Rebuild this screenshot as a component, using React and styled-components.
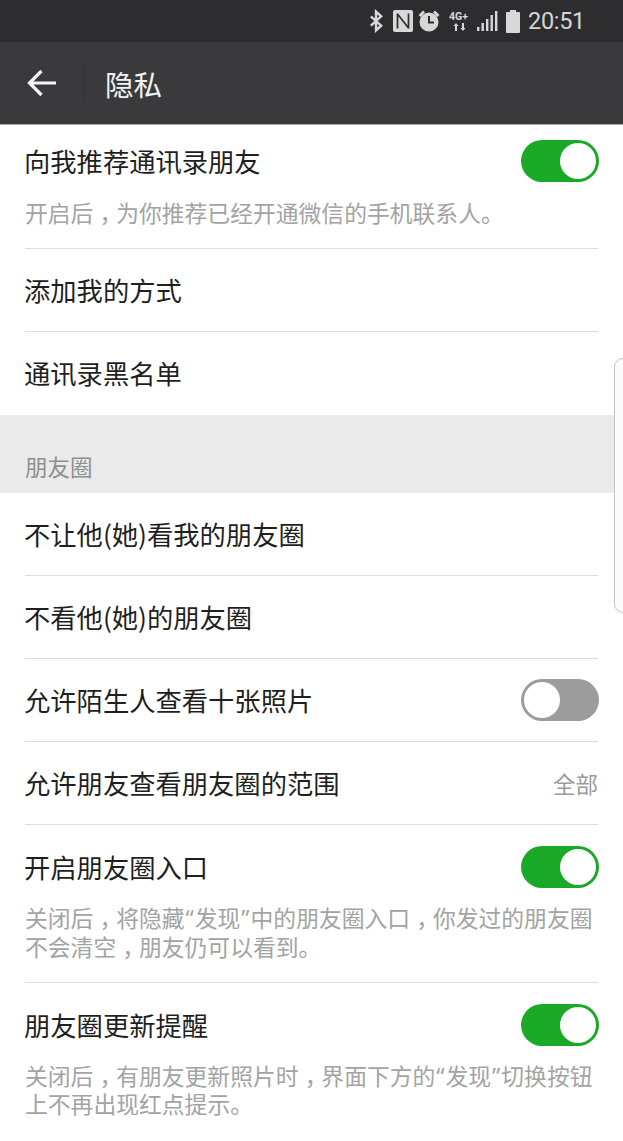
import React from "react";
import styled, { createGlobalStyle } from "styled-components";

const Global = createGlobalStyle`
  html, body { margin: 0; padding: 0; background: #fff; }
  body { font-family: "Roboto", "Noto Sans CJK SC", sans-serif; }
`;

const Page = styled.div`
  position: relative;
  width: 623px;
  height: 1141px;
  overflow: hidden;
  background: #fff;
`;

const StatusBar = styled.div`
  height: 42px;
  background: #2d2d30;
  color: #d8d8d8;
  display: flex;
  align-items: center;
  justify-content: flex-end;
  padding-right: 38px;
  box-sizing: border-box;
`;

const StatusIcon = styled.svg`
  display: block;
  margin-right: ${(p) => p.$gap || 4}px;
`;

const Clock = styled.span`
  font-family: "Roboto", sans-serif;
  font-size: 23.5px;
  letter-spacing: -0.3px;
  margin-left: 3px;
  color: #d6d6d6;
`;

const NavBar = styled.div`
  height: 83px;
  background: #3a3a3d;
  border-bottom: 1px solid #aaa;
  box-sizing: border-box;
  display: flex;
  align-items: center;
  padding-left: 27px;
`;

const BackIcon = styled.svg`
  display: block;
  width: 30px;
  height: 30px;
`;

const NavDivider = styled.div`
  width: 1px;
  height: 40px;
  margin-left: 26px;
  background: #323235;
`;

const NavTitle = styled.div`
  margin-left: 21px;
  color: #f2f2f2;
  font-size: 28.5px;
  font-family: "Noto Sans CJK SC", sans-serif;
`;

const Row = styled.div`
  height: ${(p) => p.$h}px;
  box-sizing: border-box;
  margin: 0 25px;
  border-bottom: 1px solid ${(p) => (p.$last ? "transparent" : "#dcdcdc")};
  display: flex;
  flex-direction: column;
  justify-content: ${(p) => (p.$top ? "flex-start" : "center")};
  padding-top: ${(p) => p.$top || 0}px;
`;

const RowMain = styled.div`
  display: flex;
  align-items: center;
  justify-content: space-between;
  min-height: 42px;
`;

const Title = styled.div`
  font-size: 26.3px;
  color: #1f1f1f;
  line-height: 42px;
  margin-left: -1px;
  font-family: "Noto Sans CJK SC", sans-serif;
`;

const Value = styled.div`
  font-size: 22.5px;
  color: #9a9a9a;
  font-family: "Noto Sans CJK SC", sans-serif;
`;

const Sub = styled.div`
  font-size: 22.8px;
  line-height: 28px;
  color: #a3a3a3;
  margin-top: ${(p) => p.$mt || 15}px;
  white-space: nowrap;
  font-family: "Noto Sans", "Noto Sans CJK SC", sans-serif;
`;

// half-width glyph padded back to a full cell, so the comma sits centred as in the reference
const Comma = styled.span`
  font-family: "Noto Sans CJK SC", sans-serif;
  font-feature-settings: "halt";
  padding: 0 0.23em 0 0.27em;
`;

const Quote = styled.span`
  padding: 0 1px;
`;

const Section = styled.div`
  height: 78px;
  background: #eaeaea;
  box-sizing: border-box;
  padding: 35px 25px 0;
  font-size: 22.5px;
  line-height: 32px;
  color: #8f8f8f;
  font-family: "Noto Sans CJK SC", sans-serif;
`;

const Switch = styled.div`
  width: 78px;
  height: 42px;
  margin-right: -1px;
  border-radius: 21px;
  background: ${(p) => (p.$on ? "#1aa827" : "#9c9c9c")};
  position: relative;
  flex: none;

  &::after {
    content: "";
    position: absolute;
    top: 3px;
    left: ${(p) => (p.$on ? "39px" : "3px")};
    width: 36px;
    height: 36px;
    border-radius: 50%;
    background: #fff;
  }
`;

const EdgeHandle = styled.div`
  position: absolute;
  right: -6px;
  top: 358px;
  width: 15px;
  height: 255px;
  box-sizing: border-box;
  border: 1px solid #c4c4c4;
  border-radius: 9px 0 0 9px;
  background: #fbfbfb;
`;

function SettingRow({ title, on, value, sub, h, top, last, mt }) {
  return (
    <Row $h={h} $top={top} $last={last}>
      <RowMain>
        <Title>{title}</Title>
        {on !== undefined && <Switch $on={on} />}
        {value && <Value>{value}</Value>}
      </RowMain>
      {sub && <Sub $mt={mt}>{sub}</Sub>}
    </Row>
  );
}

export default function App() {
  return (
    <Page>
      <Global />
      <StatusBar>
        <StatusIcon $gap={9} width="15" height="24" viewBox="0 0 16 24" fill="none" stroke="#d8d8d8" strokeWidth="2.6">
          <path d="M2 7l11 10-5.5 5V2L13 7 2 17" />
        </StatusIcon>
        <StatusIcon $gap={4} width="20" height="22" viewBox="0 0 20 22">
          <rect width="20" height="22" rx="2" fill="#d8d8d8" />
          <path d="M4.5 3.5v15M4.5 4 15.5 18M15.5 3.5v15" fill="none" stroke="#2d2d30" strokeWidth="1.7" />
        </StatusIcon>
        <StatusIcon $gap={8} width="24" height="24" viewBox="0 0 24 24">
          <path d="M1.5 6 6 1.5l2 2L3.5 8zM22.5 6 18 1.5l-2 2L20.5 8z" fill="#d8d8d8" />
          <circle cx="12" cy="13" r="9.5" fill="#d8d8d8" />
          <path d="M12 7v6.5h5" fill="none" stroke="#2d2d30" strokeWidth="2" />
        </StatusIcon>
        <StatusIcon $gap={6} width="22" height="22" viewBox="0 0 22 22" fill="#d8d8d8">
          <text x="0" y="10" fontSize="10.5" fontWeight="700" fontFamily="Roboto, sans-serif">4G+</text>
          <path d="M7 13l2.5 3h-5zM14 21l-2.5-3h5z" />
          <rect x="6" y="16" width="2" height="5" />
          <rect x="13" y="13" width="2" height="5" />
        </StatusIcon>
        <StatusIcon $gap={8} width="21" height="22" viewBox="0 0 21 22" fill="#d8d8d8">
          <rect x="0" y="17" width="2.4" height="4" />
          <rect x="4.5" y="13" width="2.4" height="8" />
          <rect x="9" y="9" width="2.4" height="12" />
          <rect x="13.5" y="5" width="2.4" height="16" />
          <rect x="18" y="1" width="2.4" height="20" />
        </StatusIcon>
        <StatusIcon $gap={5} width="14" height="23" viewBox="0 0 14 23" fill="#d8d8d8">
          <path d="M4 0h6v2h3a1 1 0 0 1 1 1v19a1 1 0 0 1-1 1H1a1 1 0 0 1-1-1V3a1 1 0 0 1 1-1h3z" />
        </StatusIcon>
        <Clock>20:51</Clock>
      </StatusBar>

      <NavBar>
        <BackIcon viewBox="0 0 30 30" fill="none" stroke="#f5f5f5" strokeWidth="3.2">
          <path d="M29 15H3M14.5 3 2.5 15l12 12" />
        </BackIcon>
        <NavDivider />
        <NavTitle>隐私</NavTitle>
      </NavBar>

      <SettingRow h={124} top={15} mt={17} title="向我推荐通讯录朋友" on sub={<>开启后<Comma>，</Comma>为你推荐已经开通微信的手机联系人。</>} />
      <SettingRow h={83} title="添加我的方式" />
      <SettingRow h={83} title="通讯录黑名单" last />
      <Section>朋友圈</Section>
      <SettingRow h={83} title="不让他(她)看我的朋友圈" />
      <SettingRow h={83} title="不看他(她)的朋友圈" />
      <SettingRow h={83} top={20} title="允许陌生人查看十张照片" on={false} />
      <SettingRow h={83} title="允许朋友查看朋友圈的范围" value="全部" />
      <SettingRow h={158} top={21} mt={16} title="开启朋友圈入口" on sub={<>关闭后<Comma>，</Comma>将隐藏<Quote>“</Quote>发现<Quote>”</Quote>中的朋友圈入口<Comma>，</Comma>你发过的朋友圈<br />不会清空<Comma>，</Comma>朋友仍可以看到。</>} />
      <SettingRow h={158} top={21} mt={16} last title="朋友圈更新提醒" on sub={<>关闭后<Comma>，</Comma>有朋友更新照片时<Comma>，</Comma>界面下方的<Quote>“</Quote>发现<Quote>”</Quote>切换按钮<br />上不再出现红点提示。</>} />

      <EdgeHandle />
    </Page>
  );
}
